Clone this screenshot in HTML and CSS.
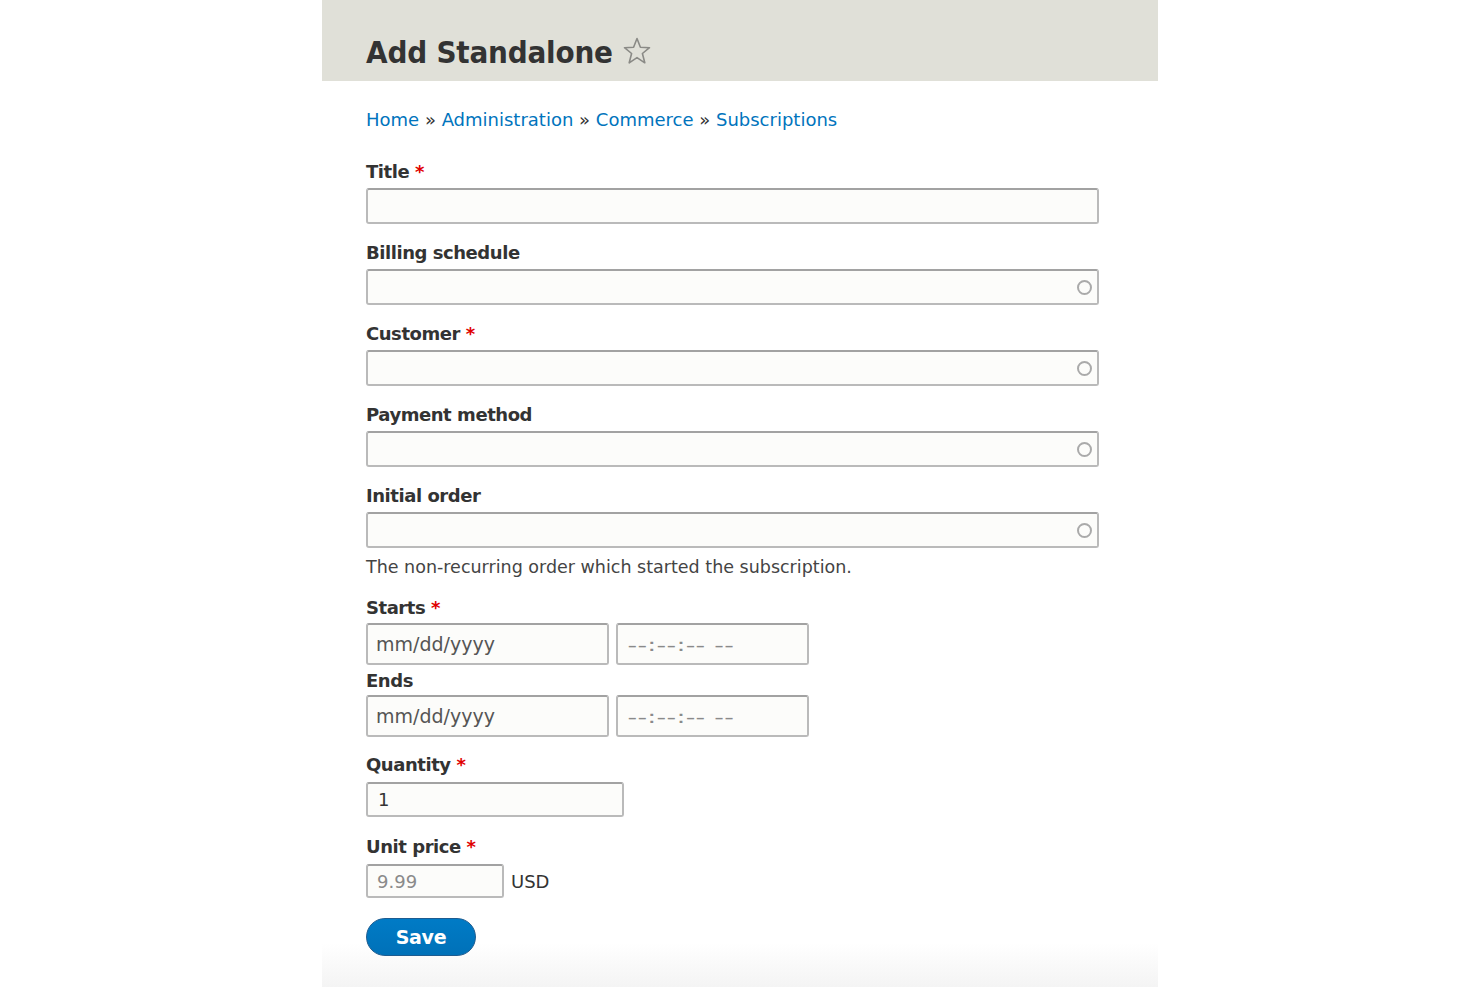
FILE: index.html
```html
<!DOCTYPE html>
<html lang="en">
<head>
<meta charset="utf-8">
<title>Add Standalone</title>
<link rel="stylesheet" href="styles.css">
</head>
<body>
<div class="page">
  <header class="page-header">
    <h1 class="page-title">Add Standalone</h1>
    <svg class="star" width="28" height="28" viewBox="0 0 28 28" aria-hidden="true">
      <polygon points="14,1.5 17.4,10.2 26.5,10.7 19.4,16.5 21.8,25.8 14,20.6 6.2,25.8 8.6,16.5 1.5,10.7 10.6,10.2" fill="none" stroke="#8a8a86" stroke-width="1.6" stroke-linejoin="round"/>
    </svg>
  </header>
  <main class="content">
    <nav class="breadcrumb">
      <a href="#">Home</a> » <a href="#">Administration</a> » <a href="#">Commerce</a> » <a href="#">Subscriptions</a>
    </nav>
    <form class="form">
      <div class="item">
        <label class="label">Title <span class="req">*</span></label>
        <div class="input wide"></div>
      </div>
      <div class="item">
        <label class="label">Billing schedule</label>
        <div class="input wide auto"><span class="throbber"></span></div>
      </div>
      <div class="item">
        <label class="label">Customer <span class="req">*</span></label>
        <div class="input wide auto"><span class="throbber"></span></div>
      </div>
      <div class="item">
        <label class="label">Payment method</label>
        <div class="input wide auto"><span class="throbber"></span></div>
      </div>
      <div class="item item-desc">
        <label class="label">Initial order</label>
        <div class="input wide auto"><span class="throbber"></span></div>
        <div class="description">The non-recurring order which started the subscription.</div>
      </div>
      <div class="item item-date">
        <label class="label">Starts <span class="req">*</span></label>
        <div class="date-row">
          <div class="input date"><span class="ph">mm/dd/yyyy</span></div>
          <div class="input time"><span class="ph light dashes">--:--:-- --</span></div>
        </div>
      </div>
      <div class="item item-date2">
        <label class="label">Ends</label>
        <div class="date-row">
          <div class="input date"><span class="ph">mm/dd/yyyy</span></div>
          <div class="input time"><span class="ph light dashes">--:--:-- --</span></div>
        </div>
      </div>
      <div class="item item-qty">
        <label class="label">Quantity <span class="req">*</span></label>
        <div class="input qty"><span class="val">1</span></div>
      </div>
      <div class="item item-price">
        <label class="label">Unit price <span class="req">*</span></label>
        <div class="price-row">
          <div class="input price"><span class="ph light">9.99</span></div>
          <span class="currency">USD</span>
        </div>
      </div>
      <button type="button" class="btn">Save</button>
    </form>
  </main>
</div>
</body>
</html>
```

FILE: styles.css
```css
html, body {
  margin: 0;
  padding: 0;
  background: #ffffff;
}
body {
  font-family: "DejaVu Sans", "Liberation Sans", sans-serif;
  color: #333333;
}
.page {
  width: 836px;
  min-height: 987px;
  margin: 0 auto;
  background: linear-gradient(to bottom, #ffffff 0, #ffffff 943px, #f4f4f4 987px);
}
.page-header {
  height: 81px;
  background: #e0e0d8;
  box-sizing: border-box;
  padding: 0 0 0 44px;
  display: flex;
  align-items: center;
  gap: 10px;
}
.page-title {
  margin: 0;
  padding-top: 22px;
  font-family: "DejaVu Sans Condensed", "DejaVu Sans", sans-serif;
  font-stretch: condensed;
  font-size: 31px;
  font-weight: bold;
  letter-spacing: -0.2px;
  color: #333333;
  line-height: 36px;
}
.star {
  margin-top: 20px;
  width: 28px;
  height: 28px;
}
.content {
  padding: 0 44px;
}
.breadcrumb {
  margin-top: 27px;
  font-size: 18px;
  line-height: 24px;
  color: #333333;
}
.breadcrumb a {
  color: #0074bd;
  text-decoration: none;
}
.form {
  margin-top: 28px;
  display: flex;
  flex-direction: column;
}
.item {
  display: flex;
  flex-direction: column;
  margin-bottom: 17px;
}
.label {
  font-size: 18px;
  font-weight: bold;
  line-height: 24px;
  letter-spacing: -0.45px;
  margin-bottom: 4px;
  color: #333333;
}
.req {
  color: #e00000;
  letter-spacing: 0;
}
.input {
  box-sizing: border-box;
  height: 36px;
  border: 2px solid #bababa;
  border-top-color: #a2a2a2;
  border-radius: 3px;
  background: #fcfcfa;
  display: flex;
  align-items: center;
  padding: 0 8px;
  font-size: 18px;
}
.wide {
  width: 733px;
}
.auto {
  justify-content: flex-end;
  padding-right: 5px;
}
.throbber {
  width: 11px;
  height: 11px;
  border: 2.5px solid #aaaaaa;
  border-radius: 50%;
}
.item-desc {
  margin-bottom: 18px;
}
.description {
  margin-top: 8px;
  font-size: 17.5px;
  line-height: 22px;
  color: #444444;
}
.item-date {
  margin-bottom: 4px;
}
.item-date .label {
  margin-bottom: 3px;
}
.item-date2 {
  margin-bottom: 16px;
}
.item-date2 .label {
  margin-bottom: 2px;
}
.date-row, .price-row {
  display: flex;
  align-items: center;
  gap: 7px;
}
.date {
  width: 243px;
  height: 42px;
  font-size: 19px;
}
.time {
  width: 193px;
  height: 42px;
}
.ph {
  color: #555555;
}
.ph.light {
  color: #8a8a8a;
}
.dashes {
  display: inline-block;
  padding-left: 1px;
  letter-spacing: 0.2px;
  transform: scaleX(1.48);
  transform-origin: left center;
}
.val {
  color: #333333;
  padding-left: 2px;
}
.item-qty .label {
  margin-bottom: 5px;
}
.qty {
  width: 258px;
  height: 35px;
}
.item-qty {
  margin-bottom: 18px;
}
.item-price {
  margin-bottom: 20px;
}
.item-price .label {
  margin-bottom: 5px;
}
.price {
  width: 138px;
  height: 34px;
}
.price .ph {
  padding-left: 1px;
}
.currency {
  font-size: 18px;
  color: #333333;
}
.btn {
  align-self: flex-start;
  width: 110px;
  height: 38px;
  border: 1px solid #1e5c90;
  border-radius: 20px;
  background: linear-gradient(to bottom, #007bc6, #0071b8);
  color: #ffffff;
  font-family: "DejaVu Sans", "Liberation Sans", sans-serif;
  font-size: 19px;
  font-weight: bold;
  letter-spacing: -0.3px;
  padding: 0;
}
```
